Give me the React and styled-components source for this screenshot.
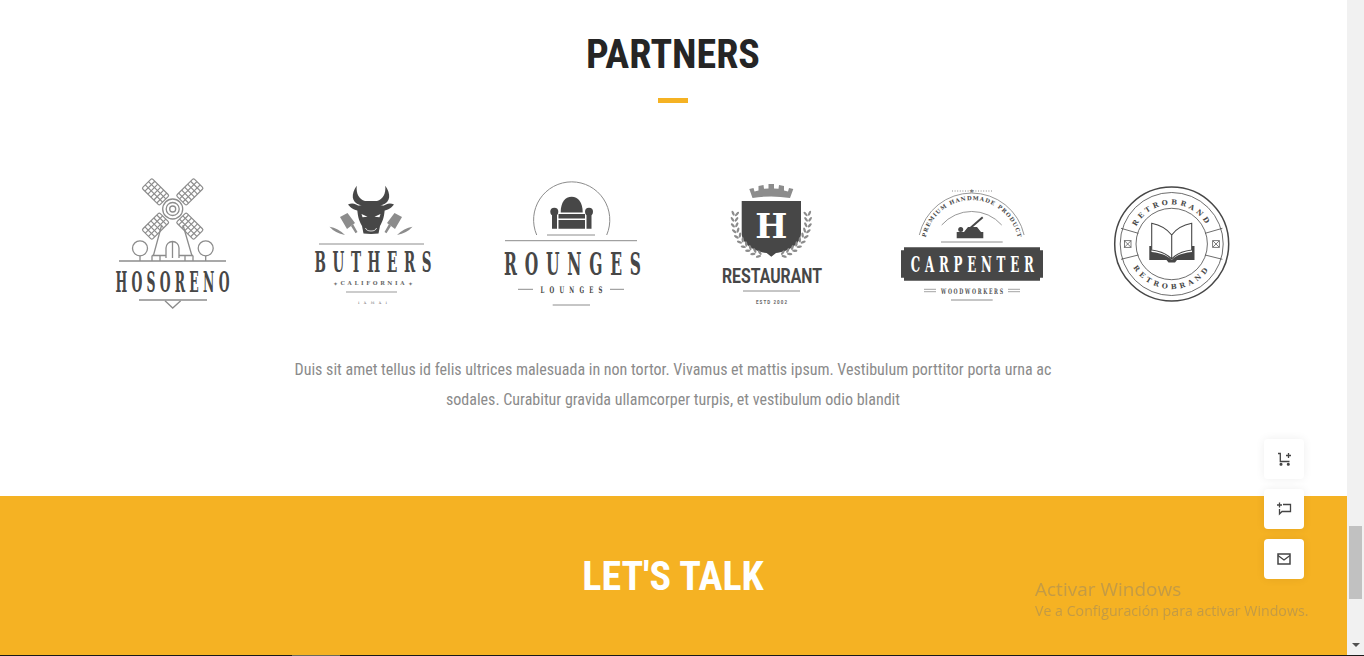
import React from 'react';
import styled, { createGlobalStyle } from 'styled-components';

const DARK = '#474747';
const GRAY = '#8c8c8c';
const AMBER = '#f5b223';

const GlobalStyle = createGlobalStyle`
  html, body { margin: 0; padding: 0; height: 656px; overflow: hidden; background: #fff; }
  body { font-family: "Roboto", "Liberation Sans", sans-serif; }
`;

const Window = styled.div`
  display: flex;
  flex-direction: column;
  width: 1364px;
  height: 656px;
  overflow: hidden;
`;

const Viewport = styled.div`
  display: flex;
  height: 655px;
`;

const Content = styled.main`
  flex: 1;
  min-width: 0;
`;

const Partners = styled.section`
  height: 496px;
  padding: 31px 1px 0 0;
  box-sizing: border-box;
  background: #fff;
`;

const Talk = styled.section`
  height: 159px;
  padding: 57px 1px 0 0;
  box-sizing: border-box;
  background: ${AMBER};
`;

const Title = styled.h2`
  margin: 0;
  font-family: "Roboto Condensed", "Roboto", sans-serif;
  font-stretch: condensed;
  font-size: 40px;
  line-height: 48px;
  font-weight: 700;
  text-align: center;
  color: ${p => p.$light ? '#fff' : '#252525'};
`;

const Accent = styled.div`
  width: 30px;
  height: 5px;
  margin: 19px auto 0;
  background: ${AMBER};
`;

const LogoRow = styled.div`
  display: grid;
  grid-template-columns: repeat(6, 200px);
  padding-left: 72px;
  margin-top: 67px;
`;

const LogoSvg = styled.svg`
  display: block;
  width: 200px;
  height: 150px;
`;

const LogoText = styled.text`
  font-family: ${p => p.$sans ? '"Roboto", sans-serif' : '"DejaVu Serif", serif'};
  font-size: ${p => p.$size}px;
  font-weight: ${p => p.$weight || 400};
  fill: ${p => p.$fill || DARK};
  text-anchor: middle;
`;

const Lede = styled.p`
  width: 850px;
  margin: 35px auto 0;
  font-family: "Roboto Condensed", "Roboto", sans-serif;
  font-stretch: condensed;
  font-size: 16px;
  line-height: 30px;
  text-align: center;
  color: #8b8b8b;
`;

const Scrollbar = styled.aside`
  display: flex;
  flex-direction: column;
  align-items: center;
  width: 17px;
  padding-top: 526px;
  box-sizing: border-box;
  background: #f1f1f1;
`;

const ScrollThumb = styled.div`
  width: 13px;
  height: 73px;
  background: #c1c1c1;
`;

const ScrollArrow = styled.div`
  margin-top: 44px;
  width: 0;
  height: 0;
  border-left: 4px solid transparent;
  border-right: 4px solid transparent;
  border-top: 4px solid #505050;
`;

const BottomEdge = styled.div`
  height: 1px;
  background: linear-gradient(to right, #1a1a1a 292px, #6b6b5a 292px, #6b6b5a 340px, #1a1a1a 340px);
`;

const FloatStack = styled.div`
  position: fixed;
  left: 1264px;
  top: 439px;
  display: flex;
  flex-direction: column;
  gap: 10px;
`;

const FloatButton = styled.button`
  display: flex;
  align-items: center;
  justify-content: center;
  width: 40px;
  height: 40px;
  padding: 0;
  border: 0;
  border-radius: 4px;
  background: #fff;
  box-shadow: 0 0 10px rgba(0, 0, 0, 0.07);
`;

const FloatIcon = styled.svg`
  width: 16px;
  height: 16px;
  fill: none;
  stroke: #444;
  stroke-width: 1.3;
`;

const Watermark = styled.div`
  position: fixed;
  left: 1035px;
  top: 577px;
  font-family: "Open Sans", "Noto Sans", sans-serif;
  color: rgba(120, 120, 120, 0.4);
  white-space: nowrap;
`;

const WatermarkTitle = styled.div`
  font-size: 19px;
  line-height: 24px;
`;

const WatermarkLine = styled.div`
  font-size: 14.2px;
  line-height: 20px;
`;

const Line = ({ x1, x2, y, w = 1, c = GRAY }) => (
  <line x1={x1} x2={x2} y1={y} y2={y} stroke={c} strokeWidth={w} />
);

// narrow slab lettering: a bold serif squeezed sideways, with the gaps set by textLength
const Slab = ({ x, y, size, width, squeeze = 0.5, fill, children }) => (
  <LogoText
    transform={`translate(${x} ${y}) scale(${squeeze} 1)`}
    $size={size}
    $weight="700"
    $fill={fill}
    textLength={width / squeeze}
    lengthAdjust="spacing"
  >
    {children}
  </LogoText>
);

const Blade = ({ angle }) => (
  <g transform={`translate(100.7 39) rotate(${angle})`} fill="none" stroke={GRAY} strokeWidth="1.2">
    <rect x="-7" y="-36.5" width="14" height="24.5" rx="1.5" />
    <line x1="-2.3" x2="-2.3" y1="-36.5" y2="-12" />
    <line x1="2.3" x2="2.3" y1="-36.5" y2="-12" />
    {[-32.3, -28.1, -23.9, -19.7, -15.5].map(y => <line key={y} x1="-7" x2="7" y1={y} y2={y} />)}
  </g>
);

const Hosoreno = () => (
  <LogoSvg viewBox="0 0 200 150">
    {[-45, 45, 135, 225].map(a => <Blade key={a} angle={a} />)}
    <g fill="none" stroke={GRAY} strokeWidth="1.3">
      <circle cx="100.7" cy="39" r="10" fill="#fff" />
      <circle cx="100.7" cy="39" r="6.5" />
      <circle cx="100.7" cy="39" r="3" />
      <path d="M89.7 55 L81.3 86 M111 55 L120 86" />
      <path d="M94 88 V78 a6.5 6.5 0 0 1 13 0 V88 M100.5 72 V88" />
      <path d="M80 85.5 H94 M107 85.5 H121 M80 85.5 V91 M121 85.5 V91 M88 85.5 V91 M113 85.5 V91" />
      <circle cx="68" cy="78.3" r="7.5" />
      <circle cx="133.7" cy="78.3" r="7.5" />
      <path d="M68 86 V91 M133.7 86 V91" />
      <path d="M93 130.7 L100.7 138 L108.7 130.7" />
    </g>
    <Line x1="47" x2="154" y="91" w="1.3" />
    <Slab x={100.5} y={121.5} size={27} width={114} squeeze={0.46}>HOSORENO</Slab>
    <Line x1="67" x2="135" y="130" w="1.3" />
  </LogoSvg>
);

const BullSide = ({ mirror }) => (
  <g transform={mirror ? 'translate(198 0) scale(-1 1)' : undefined}>
    <path fill={DARK} d="M84.7 15.7 C79 24 79 32 88 35 L99 35 L99 31 L93 31 C87 29 84 24 84.7 15.7Z" />
    <path fill={DARK} d="M76 34.5 C80 32.5 84 33.5 88 37 L87 40.5 C82 40.5 79 38 76 34.5Z" />
    <path fill={DARK} d="M85 36 L99 33 L99 64 L91.5 63.5 L90 56 C86.5 50 85.5 45 85 36Z" />
    <path fill="#fff" d="M89.5 44 L95.5 46.8 L90.5 47.2Z" />
    <path fill="none" stroke="#fff" strokeWidth="0.8" d="M99 61 C96 61 94 60 93.5 58" />
    <path fill={GRAY} d="M68 47 L75.5 43 L83 53 L75 59Z" />
    <path fill={GRAY} d="M79 56 L81 54 L85.5 62 L83.5 63.2Z" />
    <path fill={GRAY} d="M57.5 56.7 Q66 58 73 65 Q63 63 57.5 56.7Z" />
  </g>
);

const Buthers = () => (
  <LogoSvg viewBox="0 0 200 150">
    <BullSide />
    <BullSide mirror />
    <Line x1="47" x2="152" y="74" />
    <Slab x={101} y={101.5} size={27} width={117} squeeze={0.5}>BUTHERS</Slab>
    <LogoText x="100.5" y="115" $size="5.5" $weight="700" textLength="64" $fill="#666">CALIFORNIA</LogoText>
    <LogoText x="63" y="115.5" $size="6" $fill="#777">✦</LogoText>
    <LogoText x="138" y="115.5" $size="6" $fill="#777">✦</LogoText>
    <Line x1="74" x2="125" y="122" w="1.6" c="#bbb" />
    <LogoText x="100.5" y="133.5" $size="3.6" textLength="29" $fill="#666">IXMXI</LogoText>
  </LogoSvg>
);

const Rounges = () => (
  <LogoSvg viewBox="0 0 200 150">
    <path fill="none" stroke={GRAY} strokeWidth="1" d="M64.7 65 A38.1 38.1 0 1 1 134.7 65" />
    <path fill={DARK} d="M88.7 42.5 C88.7 32 93 26.7 99.7 26.7 C106 26.7 110.7 32 110.7 42.5Z" />
    <circle cx="82.3" cy="41.7" r="4" fill={DARK} />
    <circle cx="117" cy="41.7" r="4" fill={DARK} />
    <path fill={DARK} d="M80 42 H85 V58.7 H80Z M114.5 42 H119.5 V58.7 H114.5Z M86.5 44 H113 V48.5 H86.5Z M86.5 50 H113 V58.7 H86.5Z" />
    <Line x1="75" x2="123" y="65" />
    <Line x1="33" x2="165" y="70.7" />
    <Slab x={100.5} y={105} size={31} width={137} squeeze={0.5}>ROUNGES</Slab>
    <Slab x={99.5} y={123} size={9} width={62} squeeze={0.6}>LOUNGES</Slab>
    <Line x1="46" x2="61" y="119.3" />
    <Line x1="138" x2="152" y="119.3" />
    <Line x1="80.7" x2="118" y="135" />
  </LogoSvg>
);

const Wreath = ({ mirror }) => {
  const leaves = [];
  for (let a = 190; a >= 107; a -= 9) {
    const rad = (a * Math.PI) / 180;
    [34.5, 38.5].forEach((r, i) => {
      const x = 99 + r * Math.cos(rad);
      const y = 50 + r * Math.sin(rad);
      leaves.push(
        <ellipse key={`${a}-${i}`} cx={x} cy={y} rx="2.7" ry="1.2" fill={GRAY}
          transform={`rotate(${a + 90 + (i ? -35 : 35)} ${x} ${y})`} />
      );
    });
  }
  return <g transform={mirror ? 'translate(198.6 0) scale(-1 1)' : undefined}>{leaves}</g>;
};

const Restaurant = () => (
  <LogoSvg viewBox="0 0 200 150">
    <path fill={GRAY} d="M77.3 19 L81.5 18 L82.5 21.5 L86.5 20.5 L86.5 16 L91.5 15 L92 18.8 L96.5 18.5 L96.5 14 L102 14 L102 18.5 L106.5 18.8 L107 15 L112 16 L112 20.5 L116 21.5 L117 18 L121.3 19 L118 28 Q99 25 80.5 28Z" />
    <path fill={DARK} d="M69.7 31 H129 V63 C129 75 115 82 104 83 L99.3 86.7 L94.6 83 C84 82 69.7 75 69.7 63Z" />
    <Wreath />
    <Wreath mirror />
    <LogoText x="99.3" y="68.3" $size="34" $weight="700" $fill="#fff">H</LogoText>
    <LogoText x="100" y="113.3" $size="21" $weight="700" $sans textLength="100" lengthAdjust="spacingAndGlyphs">RESTAURANT</LogoText>
    <Line x1="71" x2="128" y="121" />
    <LogoText x="99.5" y="133.5" $size="4.5" $sans $weight="700" textLength="31" $fill="#666">ESTD 2002</LogoText>
  </LogoSvg>
);

const Carpenter = () => (
  <LogoSvg viewBox="0 0 200 150">
    <defs>
      <path id="carpenter-arc" d="M52.7 77 A47 47 0 0 1 146.7 77" />
    </defs>
    <path fill="none" stroke={GRAY} strokeWidth="0.9" d="M47.3 65 A53.7 53.7 0 0 1 152.1 65" />
    <path fill="none" stroke={GRAY} strokeWidth="0.9" d="M69.7 55 A40 40 0 0 1 129.7 55" />
    <LogoText $size="5.5" $weight="700" textLength="128">
      <textPath href="#carpenter-arc" startOffset="50%">PREMIUM HANDMADE PRODUCT</textPath>
    </LogoText>
    <line x1="80" x2="120" y1="21" y2="21" stroke={GRAY} strokeWidth="1" strokeDasharray="1 1.6" />
    <LogoText x="99.7" y="22.5" $size="6" $fill="#777">★</LogoText>
    <path fill={DARK} d="M84.7 68.3 V62 H92 L96 57 H105 L109 62 H111.3 V68.3Z" />
    <circle cx="88.7" cy="59.5" r="2.5" fill={DARK} />
    <line x1="94" y1="61.7" x2="110.7" y2="47.3" stroke={DARK} strokeWidth="2" />
    <Line x1="69" x2="130.7" y="72" />
    <path fill={DARK} d="M32 77.3 H168 V80.3 H171 V107.7 H168 V110.7 H32 V107.7 H29 V80.3 H32Z" />
    <Slab x={100.3} y={102.3} size={21.5} width={123} squeeze={0.55} fill="#fff">CARPENTER</Slab>
    <Slab x={100} y={124} size={7.5} width={62} squeeze={0.62} fill="#555">WOODWORKERS</Slab>
    <Line x1="52" x2="64" y="119.3" w="0.8" />
    <Line x1="52" x2="64" y="121.7" w="0.8" />
    <Line x1="136" x2="148" y="119.3" w="0.8" />
    <Line x1="136" x2="148" y="121.7" w="0.8" />
    <Line x1="79" x2="120.7" y="130" />
  </LogoSvg>
);

const Ornament = ({ x }) => (
  <g fill="none" stroke={DARK} strokeWidth="0.7">
    <rect x={x - 3.3} y="70.7" width="6.6" height="6.6" />
    <path d={`M${x - 3.3} 70.7 L${x + 3.3} 77.3 M${x + 3.3} 70.7 L${x - 3.3} 77.3`} />
  </g>
);

const Retrobrand = () => (
  <LogoSvg viewBox="0 0 200 150">
    <defs>
      <path id="retro-top" d="M60.2 74 A39.5 39.5 0 0 1 139.2 74" />
      <path id="retro-bottom" d="M54.7 74 A45 45 0 0 0 144.7 74" />
    </defs>
    <g fill="none" stroke={DARK}>
      <circle cx="99.7" cy="74" r="57" strokeWidth="1.5" />
      <circle cx="99.7" cy="74" r="51.5" strokeWidth="0.8" />
      <circle cx="99.7" cy="74" r="35.7" strokeWidth="0.8" />
      <path strokeWidth="0.8" d="M49 58.3 L66.3 63.3 M49 89.3 L66.3 85 M150.4 58.3 L133.1 63.3 M150.4 89.3 L133.1 85" />
    </g>
    <Ornament x={55.7} />
    <Ornament x={144} />
    <LogoText $size="7" $weight="700" letterSpacing="3">
      <textPath href="#retro-top" startOffset="50%">RETROBRAND</textPath>
    </LogoText>
    <LogoText $size="7" $weight="700" letterSpacing="3.4">
      <textPath href="#retro-bottom" startOffset="50%">RETROBRAND</textPath>
    </LogoText>
    <path fill="none" stroke={DARK} strokeWidth="1.1" d="M99.7 65 C95 59 88 55 79.7 53.3 V80 C88 81 95 84 99.7 89 C104 84 111 81 119.7 80 V53.3 C111 55 104 59 99.7 65 V89" />
    <path fill={DARK} d="M77.3 76 H79.5 V82 C88 83 95 85 99.7 90 C104 85 111 83 120 82 V76 H122.5 V90 H105 L103 92.5 H96.5 L94.5 90 H77.3Z" />
  </LogoSvg>
);

const App = () => (
  <Window>
    <GlobalStyle />
    <Viewport>
      <Content>
        <Partners>
          <Title>PARTNERS</Title>
          <Accent />
          <LogoRow>
            <Hosoreno />
            <Buthers />
            <Rounges />
            <Restaurant />
            <Carpenter />
            <Retrobrand />
          </LogoRow>
          <Lede>
            Duis sit amet tellus id felis ultrices malesuada in non tortor. Vivamus et mattis ipsum. Vestibulum porttitor porta urna ac<br />
            sodales. Curabitur gravida ullamcorper turpis, et vestibulum odio blandit
          </Lede>
        </Partners>
        <Talk>
          <Title $light>LET'S TALK</Title>
        </Talk>
      </Content>
      <Scrollbar>
        <ScrollThumb />
        <ScrollArrow />
      </Scrollbar>
    </Viewport>
    <BottomEdge />
    <Watermark>
      <WatermarkTitle>Activar Windows</WatermarkTitle>
      <WatermarkLine>Ve a Configuración para activar Windows.</WatermarkLine>
    </Watermark>
    <FloatStack>
      <FloatButton aria-label="cart">
        <FloatIcon viewBox="0 0 16 16">
          <path d="M2 2.5 H4.3 V10.5 H13.5 M10 4.5 H15 M12.5 2 V7" />
          <circle cx="5" cy="13.3" r="0.9" fill="#444" />
          <circle cx="12.3" cy="13.3" r="0.9" fill="#444" />
        </FloatIcon>
      </FloatButton>
      <FloatButton aria-label="message">
        <FloatIcon viewBox="0 0 16 16">
          <path d="M7 3.5 H14.5 V10.5 H6 L3.5 13 V8 M1 4 H6 M3.5 1.5 V6.5" />
        </FloatIcon>
      </FloatButton>
      <FloatButton aria-label="mail">
        <FloatIcon viewBox="0 0 16 16">
          <rect x="2" y="3" width="12" height="10" strokeWidth="1.5" />
          <path d="M2 4.5 L8 9 L14 4.5" />
        </FloatIcon>
      </FloatButton>
    </FloatStack>
  </Window>
);

export default App;
